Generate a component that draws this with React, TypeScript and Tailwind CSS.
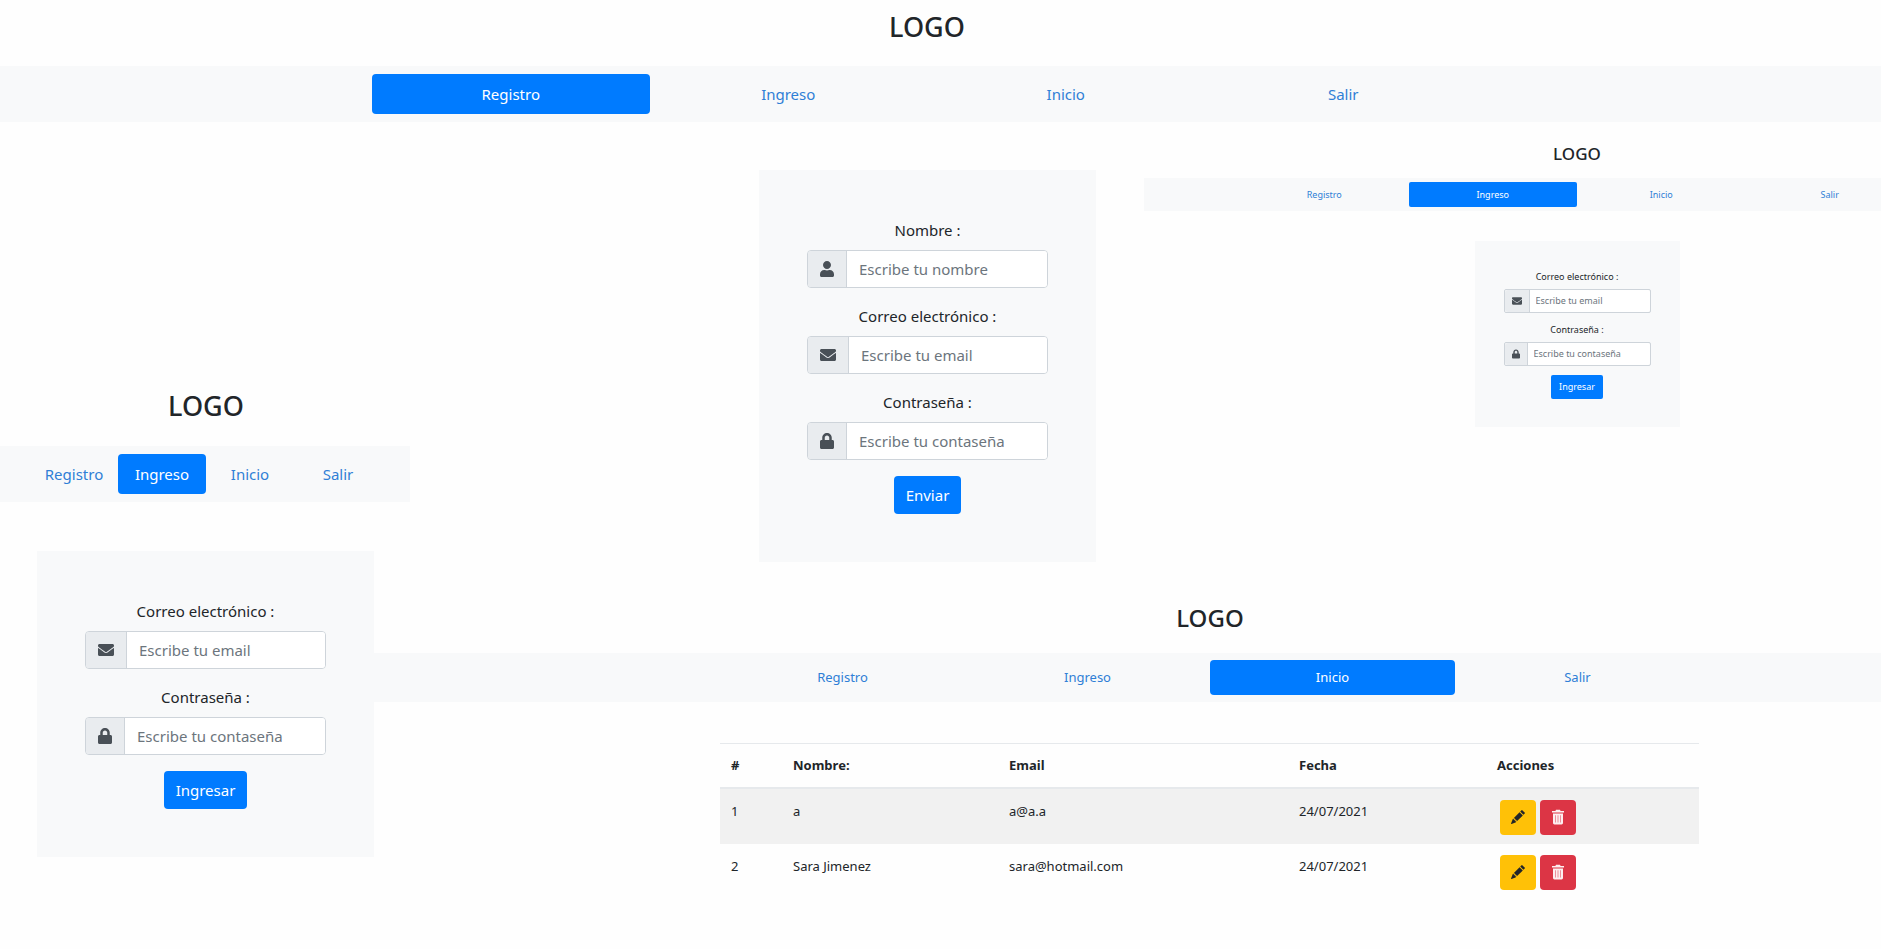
import React from "react";
import { FaEnvelope, FaLock, FaUser } from "react-icons/fa";
import { BsPencilFill } from "react-icons/bs";

const LINKS = ["Registro", "Ingreso", "Inicio", "Salir"];

function NavLinks({ active, className, linkClass }: { active: string; className: string; linkClass: string }) {
  return (
    <ul className={`grid grid-cols-4 text-center ${className}`}>
      {LINKS.map((name) => (
        <li key={name}>
          <a
            href={`#${name.toLowerCase()}`}
            className={`block ${linkClass} ${name === active ? "bg-[#007bff] text-white" : "text-[#2f7fd6]"}`}
          >
            {name}
          </a>
        </li>
      ))}
    </ul>
  );
}

const ICONS = {
  user: { Icon: FaUser, lg: "w-3.5 h-4", sm: "w-2 h-2.5" },
  mail: { Icon: FaEnvelope, lg: "w-4 h-4", sm: "w-2.5 h-2.5" },
  lock: { Icon: FaLock, lg: "w-3.5 h-4", sm: "w-2 h-2.5" },
};

interface FieldProps {
  id: string;
  label: string;
  placeholder: string;
  icon: keyof typeof ICONS;
  type?: string;
  small?: boolean;
}

function Field({ id, label, placeholder, icon, type = "text", small = false }: FieldProps) {
  const { Icon, lg, sm } = ICONS[icon];
  return (
    <div className={small ? "mb-[9px]" : "mb-4"}>
      <label
        htmlFor={id}
        className={small ? "mb-1 block text-center text-[9px] leading-4" : "mb-2 block text-center text-[15px] leading-6"}
      >
        {label}
      </label>
      <div className={`flex border border-[#ced4da] ${small ? "h-6 rounded-xs" : "h-[38px] rounded"}`}>
        <span
          className={`flex items-center rounded-l-[3px] border-r border-[#ced4da] bg-[#e9ecef] text-[#495057] ${small ? "px-[7px]" : "px-3"}`}
        >
          <Icon className={small ? sm : lg} />
        </span>
        <input
          id={id}
          type={type}
          placeholder={placeholder}
          className={`w-full min-w-0 flex-1 rounded-r-[3px] bg-white outline-none placeholder:text-[#6c757d] ${small ? "px-1.5 text-[9px]" : "px-3 text-[15px]"}`}
        />
      </div>
    </div>
  );
}

function TrashIcon() {
  return (
    <svg viewBox="0 0 14 16" className="h-4 w-3.5" fill="currentColor" aria-hidden="true">
      <path d="M5 .8h4l.6 1.2H13v1.6H1V2h3.4z" />
      <path
        fillRule="evenodd"
        d="M2 4.4h10V14a1.4 1.4 0 0 1-1.4 1.4H3.4A1.4 1.4 0 0 1 2 14zM4.4 6.2v7.2h.5V6.2zM6.75 6.2v7.2h.5V6.2zM9.1 6.2v7.2h.5V6.2z"
      />
    </svg>
  );
}

const ROWS = [
  { id: 1, name: "a", email: "a@a.a", date: "24/07/2021" },
  { id: 2, name: "Sara Jimenez", email: "sara@hotmail.com", date: "24/07/2021" },
];

function UsersTable() {
  return (
    <table className="w-[979px] table-fixed border-collapse text-left text-[13px] leading-5">
      <colgroup>
        <col className="w-[62px]" />
        <col className="w-[216px]" />
        <col className="w-[290px]" />
        <col className="w-[198px]" />
        <col />
      </colgroup>
      <thead>
        <tr className="h-11 border-t border-b-2 border-[#e6e9ec]">
          {["#", "Nombre:", "Email", "Fecha", "Acciones"].map((h) => (
            <th key={h} scope="col" className="px-[11px] font-bold">
              {h}
            </th>
          ))}
        </tr>
      </thead>
      <tbody>
        {ROWS.map((r) => (
          <tr key={r.id} className="h-14 align-top odd:bg-[#f1f1f1]">
            <td className="px-[11px] pt-3">{r.id}</td>
            <td className="px-[11px] pt-3">{r.name}</td>
            <td className="px-[11px] pt-3">{r.email}</td>
            <td className="px-[11px] pt-3">{r.date}</td>
            <td className="px-3.5 pt-[11px]">
              <div className="flex gap-1">
                <button
                  type="button"
                  aria-label="Editar"
                  className="flex h-[35px] w-9 items-center justify-center rounded bg-[#ffc107] text-[#212529]"
                >
                  <BsPencilFill className="h-3.5 w-3.5" />
                </button>
                <button
                  type="button"
                  aria-label="Eliminar"
                  className="flex h-[35px] w-9 items-center justify-center rounded bg-[#dc3545] text-[#fdeef0]"
                >
                  <TrashIcon />
                </button>
              </div>
            </td>
          </tr>
        ))}
      </tbody>
    </table>
  );
}

export default function App() {
  return (
    <div className="min-h-screen overflow-hidden bg-[#fefefe] font-['Noto_Sans','Open_Sans',sans-serif] text-[#212529]">
      <header>
        <h1 className="h-[66px] pt-2 pr-[27px] text-center text-[27px] leading-[38px] font-medium">LOGO</h1>
        <nav className="bg-[#f8f9fa] py-2 pr-[27px]">
          <NavLinks active="Registro" className="mx-auto max-w-[1110px]" linkClass="rounded py-2 text-[15px] leading-6" />
        </nav>
      </header>

      <div className="flex items-start">
        <section className="w-[374px] shrink-0 pt-[265px]">
          <div className="w-[410px]">
            <h2 className="h-[59px] pl-0.5 text-center text-[27px] leading-[38px] font-medium">LOGO</h2>
            <nav className="bg-[#f8f9fa] py-2 pl-0.5">
              <NavLinks active="Ingreso" className="mx-auto w-[352px]" linkClass="rounded py-2 text-[15px] leading-6" />
            </nav>
          </div>
          <form className="mt-[49px] ml-[37px] bg-[#f8f9fa] p-12">
            <Field id="login-email" label="Correo electrónico :" placeholder="Escribe tu email" icon="mail" type="email" />
            <Field id="login-pass" label="Contraseña :" placeholder="Escribe tu contaseña" icon="lock" type="password" />
            <div className="text-center">
              <button type="button" className="h-[38px] rounded bg-[#007bff] px-3 text-[15px] text-white">
                Ingresar
              </button>
            </div>
          </form>
        </section>

        <div className="min-w-0 flex-1">
          <div className="flex h-[472px] items-start">
            <form className="mt-12 ml-[385px] w-[337px] shrink-0 bg-[#f8f9fa] p-12">
              <Field id="reg-name" label="Nombre :" placeholder="Escribe tu nombre" icon="user" />
              <Field id="reg-email" label="Correo electrónico :" placeholder="Escribe tu email" icon="mail" type="email" />
              <Field id="reg-pass" label="Contraseña :" placeholder="Escribe tu contaseña" icon="lock" type="password" />
              <div className="text-center">
                <button type="button" className="h-[38px] rounded bg-[#007bff] px-3 text-[15px] text-white">
                  Enviar
                </button>
              </div>
            </form>

            <section className="ml-12 min-w-0 flex-1 overflow-hidden pt-5">
              <div className="w-[866px]">
                <h2 className="h-9 text-center text-[17px] leading-6 font-medium">LOGO</h2>
                <nav className="bg-[#f8f9fa] py-1">
                  <NavLinks active="Ingreso" className="mx-auto w-[674px]" linkClass="rounded-xs py-1 text-[9px] leading-[17px]" />
                </nav>
                <form className="mx-auto mt-[30px] w-[205px] bg-[#f8f9fa] px-[29px] py-7">
                  <Field small id="mini-email" label="Correo electrónico :" placeholder="Escribe tu email" icon="mail" type="email" />
                  <Field small id="mini-pass" label="Contraseña :" placeholder="Escribe tu contaseña" icon="lock" type="password" />
                  <div className="flex justify-center">
                    <button type="button" className="h-6 rounded-xs bg-[#007bff] px-2 text-[9px] text-white">
                      Ingresar
                    </button>
                  </div>
                </form>
              </div>
            </section>
          </div>

          <section>
            <h2 className="h-[59px] pt-2 pl-[165px] text-center text-[24px] leading-8 font-medium">LOGO</h2>
            <nav className="bg-[#f8f9fa] py-[7px] pl-[346px]">
              <NavLinks active="Inicio" className="w-[980px]" linkClass="rounded py-2 text-[13px] leading-[19px]" />
            </nav>
            <div className="mt-[41px] ml-[346px]">
              <UsersTable />
            </div>
          </section>
        </div>
      </div>
    </div>
  );
}
